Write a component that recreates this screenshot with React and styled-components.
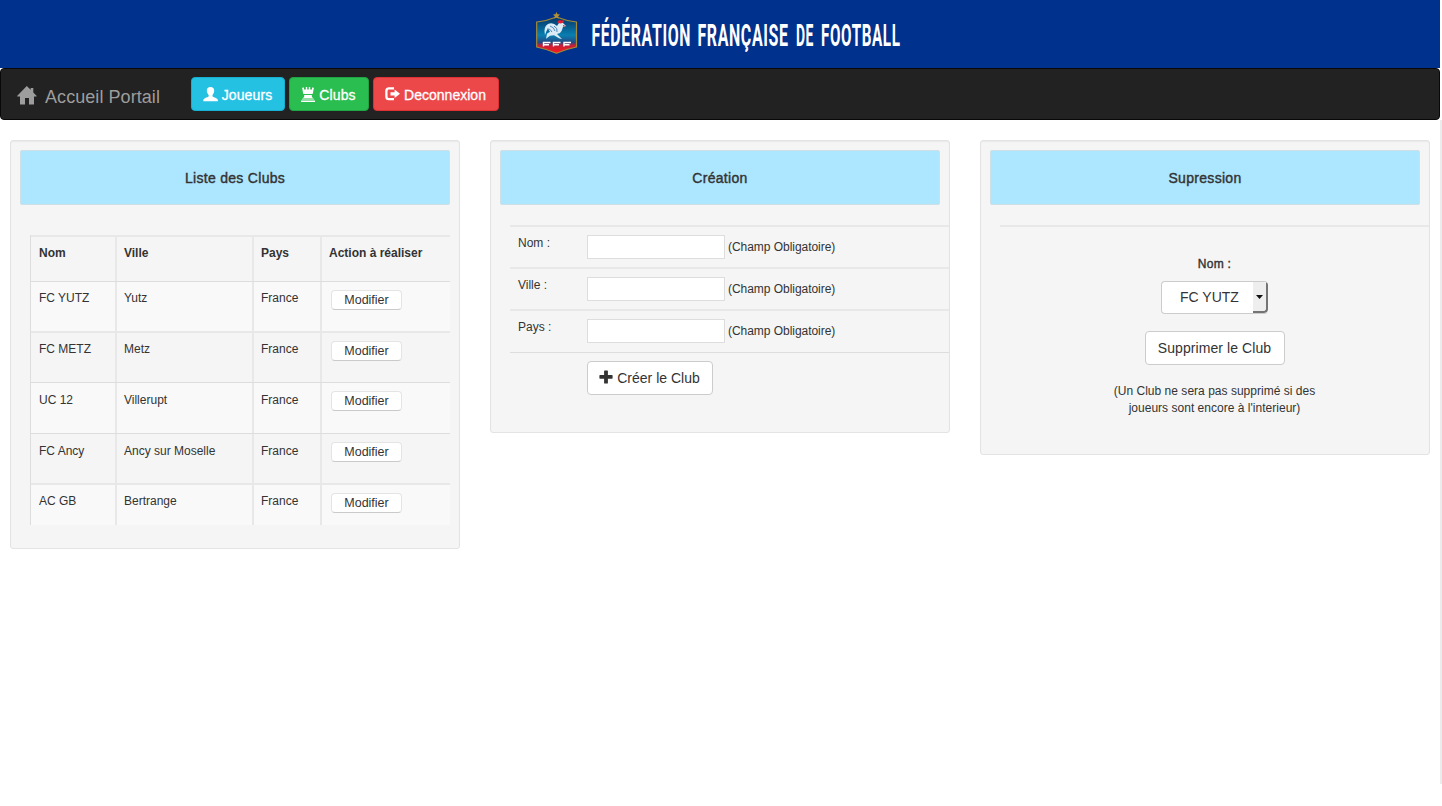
import React from "react";
import styled, { createGlobalStyle } from "styled-components";

const GlobalStyle = createGlobalStyle`
  * { box-sizing: border-box; }
  html { background: #fff; }
  body {
    margin: 0;
    color: #333;
    font: 12px/17px "Liberation Sans", Arial, sans-serif;
  }
`;

const Page = styled.div`
  display: grid;
  grid-template-columns: 1440px 1fr;
  min-height: 806px;
`;

const Edge = styled.div`
  margin-top: 120px;
  height: 664px;
  background: #ececec;
`;

const Banner = styled.header`
  height: 68px;
  background: #00318c;
  display: flex;
  padding-left: 530px;
`;

const Navbar = styled.nav`
  height: 52px;
  background: #222;
  border: 1px solid #080808;
  border-radius: 4px;
  display: flex;
  align-items: flex-start;
  padding: 8px 0 0 16px;
`;

const Brand = styled.div`
  width: 174px;
  display: flex;
  align-items: center;
  gap: 8px;
  height: 38px;
  color: #9d9d9d;
  font-size: 18px;
  letter-spacing: 0.06px;

  span { padding-top: 2px; }
  svg { margin-top: -1px; }
`;

const Button = styled.button`
  display: flex;
  align-items: center;
  justify-content: center;
  gap: 4px;
  width: ${(p) => p.$w}px;
  height: 34px;
  padding: ${(p) => (p.$bg ? "1px 1px 0 0" : "0 0 1px")};
  margin: 0;
  font: 14px/20px "Liberation Sans", Arial, sans-serif;
  letter-spacing: ${(p) => p.$ls || 0}px;
  color: ${(p) => (p.$bg ? "#fff" : "#333")};
  -webkit-text-stroke: ${(p) => (p.$bg ? "0.3px" : "0")};
  background: ${(p) => p.$bg || "#fff"};
  border: 1px solid ${(p) => p.$line || "#ccc"};
  border-radius: 4px;

  svg { margin-top: -1px; }
`;

const NavButtons = styled.div`
  display: flex;
  gap: 4px;
`;

const Columns = styled.main`
  display: grid;
  grid-template-columns: 450px 460px 450px;
  column-gap: 30px;
  align-items: start;
  padding: 20px 10px 0;
`;

const Well = styled.section`
  height: ${(p) => p.$h}px;
  padding: 9px;
  background: #f5f5f5;
  border: 1px solid #e3e3e3;
  border-radius: 3px;
  box-shadow: inset 0 1px 1px rgba(0, 0, 0, 0.05);
`;

const Title = styled.h2`
  margin: 0;
  height: 55px;
  padding-top: 2px;
  display: flex;
  align-items: center;
  justify-content: center;
  background: #ade6ff;
  border: 1px solid #cfdfe6;
  border-radius: 2px;
  font-size: 14px;
  font-weight: 400;
  letter-spacing: 0.3px;
  -webkit-text-stroke: 0.4px #333;
`;

const Table = styled.div`
  margin: 30px 0 0 10px;
  border-left: 1px solid #ddd;
`;

const Row = styled.div`
  display: grid;
  grid-template-columns: 84px 137px 68px 1fr;
  height: ${(p) => p.$h}px;
  border-top: ${(p) => (p.$soft ? "2px solid #e8e8e8" : "1px solid #ddd")};
  background: ${(p) => (p.$striped ? "#f9f9f9" : "transparent")};
  font-weight: ${(p) => (p.$head ? 700 : 400)};
`;

const Cell = styled.div`
  padding: ${(p) => (p.$low ? 9 : 8)}px 0 0 ${(p) => (p.$first ? 8 : 7)}px;
  border-left: ${(p) => (p.$first ? "0" : "2px solid #e8e8e8")};
`;

const EditButton = styled.button`
  display: block;
  width: 71px;
  height: 20px;
  margin: 0 0 0 2px;
  padding: 0;
  color: #333;
  font: 12.5px/17px "Liberation Sans", Arial, sans-serif;
  background: #fff;
  border: 1px solid #e4e4e4;
  border-bottom-color: #cacaca;
  border-radius: 4px;
`;

const Form = styled.form`
  margin: 20px -9px 0 10px;
`;

const Field = styled.label`
  display: grid;
  grid-template-columns: 69px 138px 1fr;
  height: 42px;
  padding: 8px 0 0 8px;
  border-top: 2px solid #e8e8e8;
`;

const Input = styled.input`
  width: 138px;
  height: 24px;
  border: 1px solid #ddd;
  background: #fff;
  outline: none;
`;

const Hint = styled.span`
  padding: 4px 0 0 3px;
  letter-spacing: -0.04px;
`;

const FormActions = styled.div`
  border-top: 1px solid #ddd;
  margin-top: 1px;
  padding: 8px 0 0 76.500px;
`;

const Removal = styled.form`
  margin: 20px -9px 0 10px;
  padding: 29px 0 0;
  border-top: 2px solid #e8e8e8;
  display: flex;
  flex-direction: column;
  align-items: center;
  letter-spacing: 0.02px;
`;

const FieldName = styled.div`
  height: 25px;
  -webkit-text-stroke: 0.4px #333;
  letter-spacing: 0.3px;
`;

const Select = styled.div`
  display: flex;
  width: 107px;
  height: 33px;
  border: 1px solid #ccc;
  border-right: 0;
  border-radius: 4px;
  background: #fff;
  overflow: hidden;
  margin-bottom: 17px;
  font-size: 14px;
  line-height: 31px;
`;

const SelectValue = styled.span`
  flex: 1;
  padding-left: 18px;
  letter-spacing: 0;
`;

const SelectArrow = styled.span`
  width: 15px;
  display: flex;
  align-items: center;
  justify-content: center;
  background: #eee;
  border-right: 2px solid #747474;
  border-bottom: 2px solid #747474;
  border-radius: 0 0 4px 0;
`;

const Note = styled.p`
  margin: 18px 0 0;
  width: 210px;
  text-align: center;
`;

const Wordmark = styled.text`
  font-family: Roboto, sans-serif;
  font-size: 31px;
  font-weight: 700;
  letter-spacing: 1.2px;
  fill: #fff;
`;

const words = [
  { text: "FÉDÉRATION", x: 591.5, width: 99.500 },
  { text: "FRANÇAISE", x: 697.5, width: 91 },
  { text: "DE", x: 796, width: 18 },
  { text: "FOOTBALL", x: 821, width: 79.500 },
];

const Crest = () => (
  <svg width="400" height="68" viewBox="530 0 400 68" overflow="visible">
    <defs>
      <linearGradient id="shield" x1="0" y1="0" x2="0" y2="1">
        <stop offset="0" stopColor="#063469" />
        <stop offset=".5" stopColor="#087fb0" />
        <stop offset=".7" stopColor="#254a86" />
        <stop offset=".78" stopColor="#c3203c" />
        <stop offset="1" stopColor="#ff1717" />
      </linearGradient>
    </defs>
    <path d="M536.7 22q10-1 19.8-5 10 4 20 5v25q-10 2-20 6.300q-10-4.300-19.800-6.300z" fill="url(#shield)" stroke="#a58b35" strokeWidth="1.200" />
    <path d="M556.500 12l1.100 2.300 2.500.3-1.900 1.700.5 2.500-2.200-1.200-2.200 1.200.5-2.500-1.900-1.700 2.500-.3z" fill="#b49232" />
    <path d="M545 35q-2-8 3-11 5-2 9 2l2-3q3-2 5 1l2 2-3 1q-1 4-3 6l-3 1 5 5-3-.8-5-3-4 .5-4 3 1-5 3-2-2-3q-2 2-3 6.300z" fill="#dceaf5" />
    <path d="M547 29q3-1 5 3m-2-6q4 1 5 5m-1-5q4 2 3 6" fill="none" stroke="#3b7db0" strokeWidth=".9" />
    <path d="M557.500 23q0-3 3-3l1 1 2-1 .5 2-3 1.500zM563 25l1.500 0-.5 3z" fill="#e11e32" />
    <path d="M543.500 46.500v-4h7m-7 2.200h5.500M553.500 46.500v-4h7m-7 2.200h5.500M564 46.500v-4h7m-7 2.200h5.500" fill="none" stroke="#fff" strokeWidth="1.400" />
    {words.map((w) => (
      <Wordmark key={w.text} x={w.x} y="46" textLength={w.width} lengthAdjust="spacingAndGlyphs">{w.text}</Wordmark>
    ))}
  </svg>
);

const HomeIcon = () => (
  <svg width="20" height="20" viewBox="0 0 20 20" fill="currentColor">
    <path d="M9.800 0L13.700 3.800V2h2.600v4.400L19.500 9.700c.3.400.1.800-.4.800H17V18q0 .6-.6.600H12V12H8v6.600H3.600Q3 18.600 3 18v-7.500H.7c-.5 0-.7-.4-.4-.8z" />
  </svg>
);

const UserIcon = () => (
  <svg width="15" height="15" viewBox="0 0 15 15" fill="currentColor">
    <path d="M7.500 0C9.800 0 11.200 1.400 11.200 3.600c0 1.600-.6 3.200-1.700 4.400v1.300c0 .8 4.700 1.700 5.200 3.300.2.600.2 1.200.2 1.700H.3c0-.5 0-1.100.2-1.700.5-1.600 5.200-2.500 5.200-3.300V8C4.500 6.800 3.800 5.200 3.800 3.600 3.800 1.400 5.200 0 7.500 0z" />
  </svg>
);

const TowerIcon = () => (
  <svg width="14" height="15" viewBox="0 0 14 15" fill="currentColor">
    <path d="M1.100.8L3 .4v2h1.800V0h1.400v2.400h1.600V0h1.400v2.400H11v-2l1.900.4-1 5.400c-.1.600-.5.900-1 .9H3.100c-.5 0-.9-.3-1-.9zM3.200 8h7.600v1.500l1 1.500H2.200l1-1.500zM1.700 11.500h10.600l1 1H.7zM0 13.400h14V15H0z" />
  </svg>
);

const LogoutIcon = () => (
  <svg width="15" height="14" viewBox="0 0 15 14">
    <path d="M9 1.400H4Q1.400 1.400 1.400 4v5.500Q1.400 12.200 4 12.200h5" fill="none" stroke="currentColor" strokeWidth="2.300" />
    <path d="M9.600 2.500L15 6.800l-5.400 4.300V8.400H5.500V5.200h4.100z" fill="currentColor" />
  </svg>
);

const PlusIcon = () => (
  <svg width="14" height="14" viewBox="0 0 14 14" fill="currentColor">
    <path d="M5.100 1q0-.6.600-.6h2.600q.6 0 .6.600v4.100H13q.6 0 .6.600v2.400q0 .6-.6.600H8.900V13q0 .6-.6.600H5.700q-.6 0-.6-.6V8.700H1q-.6 0-.6-.6V5.700q0-.6.600-.6h4.100z" />
  </svg>
);

const clubs = [
  { name: "FC YUTZ", city: "Yutz", h: 50 },
  { name: "FC METZ", city: "Metz", h: 51, soft: true },
  { name: "UC 12", city: "Villerupt", h: 51, low: true },
  { name: "FC Ancy", city: "Ancy sur Moselle", h: 50, low: true },
  { name: "AC GB", city: "Bertrange", h: 42, soft: true },
];

export default function App() {
  return (
    <Page>
      <GlobalStyle />
      <div>
        <Banner><Crest /></Banner>
        <Navbar>
          <Brand><HomeIcon /><span>Accueil Portail</span></Brand>
          <NavButtons>
            <Button type="button" $w={94} $ls={0.1} $bg="#24c1e3" $line="#17afd0"><UserIcon />Joueurs</Button>
            <Button type="button" $w={80} $ls={0.1} $bg="#2abd50" $line="#20a544"><TowerIcon />Clubs</Button>
            <Button type="button" $w={126} $ls={0.02} $bg="#ec484a" $line="#df3033"><LogoutIcon />Deconnexion</Button>
          </NavButtons>
        </Navbar>
        <Columns>
          <Well $h={409}>
            <Title>Liste des Clubs</Title>
            <Table>
              <Row $h={46} $soft $head>
                <Cell $first>Nom</Cell>
                <Cell>Ville</Cell>
                <Cell>Pays</Cell>
                <Cell>Action à réaliser</Cell>
              </Row>
              {clubs.map((c, i) => (
                <Row key={c.name} $h={c.h} $soft={c.soft} $striped={i % 2 === 0}>
                  <Cell $first $low={c.low}>{c.name}</Cell>
                  <Cell $low={c.low}>{c.city}</Cell>
                  <Cell $low={c.low}>France</Cell>
                  <Cell><EditButton type="button">Modifier</EditButton></Cell>
                </Row>
              ))}
            </Table>
          </Well>
          <Well $h={293}>
            <Title>Création</Title>
            <Form>
              {["Nom", "Ville", "Pays"].map((f) => (
                <Field key={f}>
                  <span>{f} :</span>
                  <Input />
                  <Hint>(Champ Obligatoire)</Hint>
                </Field>
              ))}
              <FormActions>
                <Button type="button" $w={126}><PlusIcon />Créer le Club</Button>
              </FormActions>
            </Form>
          </Well>
          <Well $h={315}>
            <Title>Supression</Title>
            <Removal>
              <FieldName>Nom :</FieldName>
              <Select>
                <SelectValue>FC YUTZ</SelectValue>
                <SelectArrow>
                  <svg width="7" height="4" viewBox="0 0 7 4"><path d="M0 0h7L3.500 4z" fill="#111" /></svg>
                </SelectArrow>
              </Select>
              <Button type="button" $w={140} $ls={0.08}>Supprimer le Club</Button>
              <Note>(Un Club ne sera pas supprimé si des joueurs sont encore à l'interieur)</Note>
            </Removal>
          </Well>
        </Columns>
      </div>
      <Edge />
    </Page>
  );
}
